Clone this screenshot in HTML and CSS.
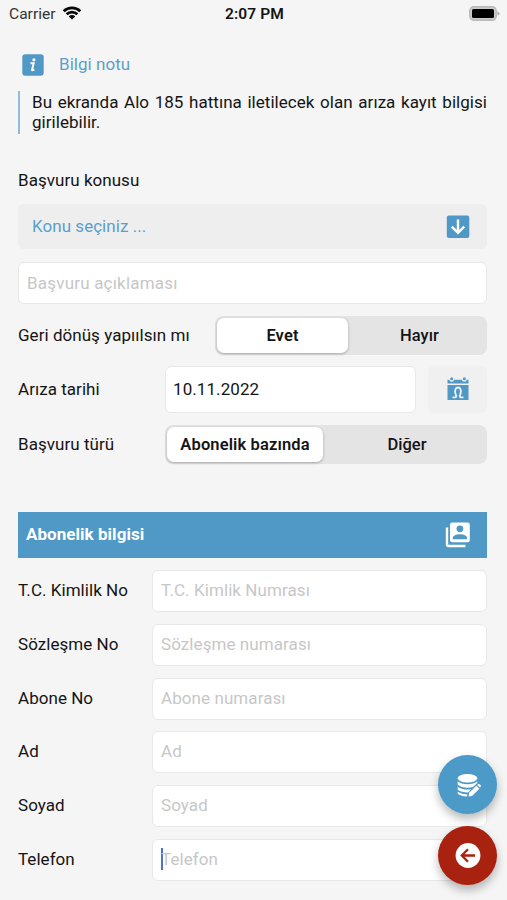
FILE: index.html
```html
<!DOCTYPE html>
<html lang="tr">
<head>
<meta charset="utf-8">
<title>Arıza kayıt</title>
<link rel="stylesheet" href="styles.css">
</head>
<body>
<header class="status">
  <div class="carrier"><span>Carrier</span>
    <svg width="20" height="14" viewBox="0 0 20 14"><path d="M1.7 5.3a12 12 0 0 1 16.6 0M4.6 8.3a7.7 7.7 0 0 1 10.8 0" fill="none" stroke="#080808" stroke-width="2.7"/><path d="M6.7 10.4a4.7 4.7 0 0 1 6.6 0L10 13.6z" fill="#080808"/></svg>
  </div>
  <div class="time">2:07 PM</div>
  <svg class="battery" width="31" height="15" viewBox="0 0 31 15"><rect x=".8" y=".8" width="26.4" height="13.4" rx="4" fill="#ccc" stroke="#b8b8b8" stroke-width="1.5"/><rect x="3" y="3" width="22" height="9" rx="1.5" fill="#000"/><path d="M28.5 5.2q2 .8 2 2.3t-2 2.3z" fill="#aaa"/></svg>
</header>
<main>
  <div class="note-title">
    <svg width="22" height="22" viewBox="0 0 22 22"><rect x=".3" y=".3" width="21.4" height="21.4" rx="3" fill="#5098c6"/><circle cx="11.9" cy="5.8" r="1.6" fill="#fff"/><path d="M8.5 9.2h3.2l-1.6 6.4q-.2 1.2 2.2 0" fill="none" stroke="#fff" stroke-width="2"/></svg>
    <span>Bilgi notu</span>
  </div>
  <p class="note">Bu ekranda Alo 185 hattına iletilecek olan arıza kayıt bilgisi girilebilir.</p>
  <div class="label subject">Başvuru konusu</div>
  <div class="select"><span>Konu seçiniz ...</span>
    <svg width="24" height="24" viewBox="0 0 24 24"><rect x=".8" y=".5" width="22.5" height="22.5" rx="2" fill="#5098c6"/><path d="M12 4.500v13M5.800 11.700l6.200 6.100 6.200-6.100" fill="none" stroke="#fff" stroke-width="2.400"/></svg>
  </div>
  <div class="field desc">Başvuru açıklaması</div>
  <div class="row callback"><span class="label">Geri dönüş yapıılsın mı</span>
    <div class="segments"><span class="active">Evet</span><span>Hayır</span></div>
  </div>
  <div class="row date"><span class="label">Arıza tarihi</span>
    <div class="field value">10.11.2022</div>
    <div class="calendar">
      <svg width="22" height="24" viewBox="0 0 22 24"><path d="M.5 2.800h1.700a2.600 2.600 0 0 0 5 0h7.600a2.600 2.600 0 0 0 5 0h1.700v3.600h-21zM.5 8h21v15H.5z" fill="#5098c6"/><circle cx="4.700" cy="1.800" r="1.500" fill="#5098c6"/><circle cx="17.300" cy="1.800" r="1.500" fill="#5098c6"/><path d="M5.500 20.300h2.700q1.800-.5.700-2.300c-4-10 8.200-10 4.200 0q-1.100 1.800.7 2.300h2.700" fill="none" stroke="#eef4f8" stroke-width="1.800"/></svg>
    </div>
  </div>
  <div class="row type"><span class="label">Başvuru türü</span>
    <div class="segments"><span class="active">Abonelik bazında</span><span>Diğer</span></div>
  </div>
  <div class="section"><span>Abonelik bilgisi</span>
    <svg width="26" height="26" viewBox="0 0 26 26"><path d="M3 5.500v17a1.500 1.500 0 0 0 1.500 1.500h17" fill="none" stroke="#fff" stroke-width="2.400"/><rect x="6" y=".6" width="19.800" height="19.600" rx="2.200" fill="#fff"/><circle cx="15.900" cy="6.800" r="3.400" fill="#5098c6"/><path d="M8.800 17.300v-1.200c0-5 14.200-5 14.200 0v1.200z" fill="#5098c6"/></svg>
  </div>
  <div class="form">
    <div class="row"><span class="label">T.C. Kimlilk No</span><div class="field">T.C. Kimlik Numrası</div></div>
    <div class="row"><span class="label">Sözleşme No</span><div class="field">Sözleşme numarası</div></div>
    <div class="row"><span class="label">Abone No</span><div class="field">Abone numarası</div></div>
    <div class="row"><span class="label">Ad</span><div class="field">Ad</div></div>
    <div class="row"><span class="label">Soyad</span><div class="field">Soyad</div></div>
    <div class="row"><span class="label">Telefon</span><div class="field focused">Telefon</div></div>
  </div>
</main>
<div class="actions">
  <div class="fab save">
    <svg width="24" height="24" viewBox="0 0 24 24"><ellipse cx="10.500" cy="5.200" rx="9.800" ry="4.200" fill="#fff"/><path d="M.7 8.200c3.500 4 16.100 4 19.600 0v1.900l-4.300 4Q6.500 16 .7 11.700zM.7 13.800q4.800 3.600 13.400 2.600L11 19.500Q4.500 19.500.7 16.800zM.7 18.700q4 2.500 9.700 2.700L10 23.500Q4 23.300.7 20.800z" fill="#fff"/><path d="M11.600 23.500l.5-3.700 7.300-7 3 3-7.400 7.200zM20.200 12l.9-.8q.8-.6 1.500.1l1 1q.7.7 0 1.500l-.8.800z" fill="#fff"/></svg>
  </div>
  <div class="fab back">
    <svg width="26" height="26" viewBox="0 0 26 26"><circle cx="13" cy="12.500" r="12.400" fill="#fff"/><path d="M20 12.500H7.200M13 6.300l-6.200 6.200 6.200 6.200" fill="none" stroke="#a9210f" stroke-width="2.300"/></svg>
  </div>
</div>
</body>
</html>
```
FILE: styles.css
```css
* { box-sizing: border-box; }
body {
  margin: 0;
  height: 900px;
  overflow: hidden;
  background: #f5f5f5;
  color: #141414;
  font: 17px/20px Roboto, sans-serif;
  letter-spacing: 0.04px;
}
svg { display: block; flex: none; }
.status {
  display: grid;
  grid-template-columns: 1fr auto 1fr;
  align-items: center;
  height: 27px;
  padding: 0 7px 0 9px;
  font-size: 15.5px;
}
.carrier { display: flex; align-items: center; gap: 6px; color: #333; }
.carrier svg { margin-top: -2px; }
.time { font-weight: 600; letter-spacing: 0.1px; }
.battery { justify-self: end; margin-top: -1px; }
main { padding: 0 20px 0 18px; }
.note-title {
  display: flex;
  align-items: center;
  gap: 15px;
  height: 22px;
  margin: 27px 0 0 4px;
  color: #5b9fcb;
}
.note-title span, .select span, .section span { padding-bottom: 2px; }
.note {
  height: 43px;
  margin: 15px 0 0;
  padding: 1px 0 0 12px;
  border-left: 2px solid #91bddc;
  text-align: justify;
}
.subject { margin: 36px 0 14px; }
.select {
  display: flex;
  align-items: center;
  justify-content: space-between;
  height: 45px;
  padding: 0 17px 0 14px;
  border-radius: 6px;
  background: #eee;
  color: #5b9fcb;
}
.field {
  display: flex;
  align-items: center;
  flex: 1;
  height: 42px;
  padding: 0 8px 2px;
  border: 1px solid #e8e8e8;
  border-radius: 6px;
  background: #fff;
  color: #c7c7c7;
  letter-spacing: 0.08px;
}
.desc { margin-top: 13px; padding-bottom: 1px; letter-spacing: 0.2px; }
.row { display: flex; align-items: center; }
.row .label { padding-bottom: 2px; }
.callback { height: 39px; margin-top: 12px; }
.callback .label { width: 197px; }
.date { height: 47px; margin-top: 11px; }
.date .label, .type .label { width: 147px; }
.value { height: 47px; padding-left: 7px; color: #141414; }
.calendar {
  display: grid;
  place-items: center;
  width: 59px;
  height: 47px;
  margin-left: 12px;
  padding-bottom: 1px;
  border-radius: 6px;
  background: #f0f0f0;
}
.type { height: 39px; margin-top: 12px; }
.segments {
  display: flex;
  flex: 1;
  height: 39px;
  padding: 2px;
  border-radius: 8px;
  background: #e4e4e4;
  font-weight: 500;
  font-size: 16.5px;
}
.segments span { display: grid; place-items: center; flex: 1; padding-left: 6px; }
.segments .active {
  flex: none;
  width: 131px;
  padding: 0;
  border-radius: 7px;
  background: #fff;
  box-shadow: 0 1px 3px rgba(0, 0, 0, 0.28);
  font-weight: 600;
  letter-spacing: 0.12px;
}
.type .active { width: 156px; }
.section {
  display: flex;
  align-items: center;
  justify-content: space-between;
  height: 46px;
  margin-top: 48px;
  padding: 0 17px 0 8px;
  background: #5098c6;
  color: #fff;
  font-weight: 700;
}
.form { display: grid; gap: 11.8px; margin-top: 12px; }
.form .label { width: 134px; }
.focused::before {
  content: "";
  width: 2px;
  height: 22px;
  margin: 1px -2px 0 0;
  background: #4c70d6;
}
.actions {
  position: absolute;
  top: 755px;
  right: 10px;
  display: grid;
  gap: 12px;
}
.fab {
  display: grid;
  place-items: center;
  width: 59px;
  height: 59px;
  border-radius: 50%;
  box-shadow: 0 5px 10px rgba(0, 0, 0, 0.28);
}
.save { background: #4c9ac8; }
.save svg { margin-left: 2px; }
.back { background: #a9210f; }
```
